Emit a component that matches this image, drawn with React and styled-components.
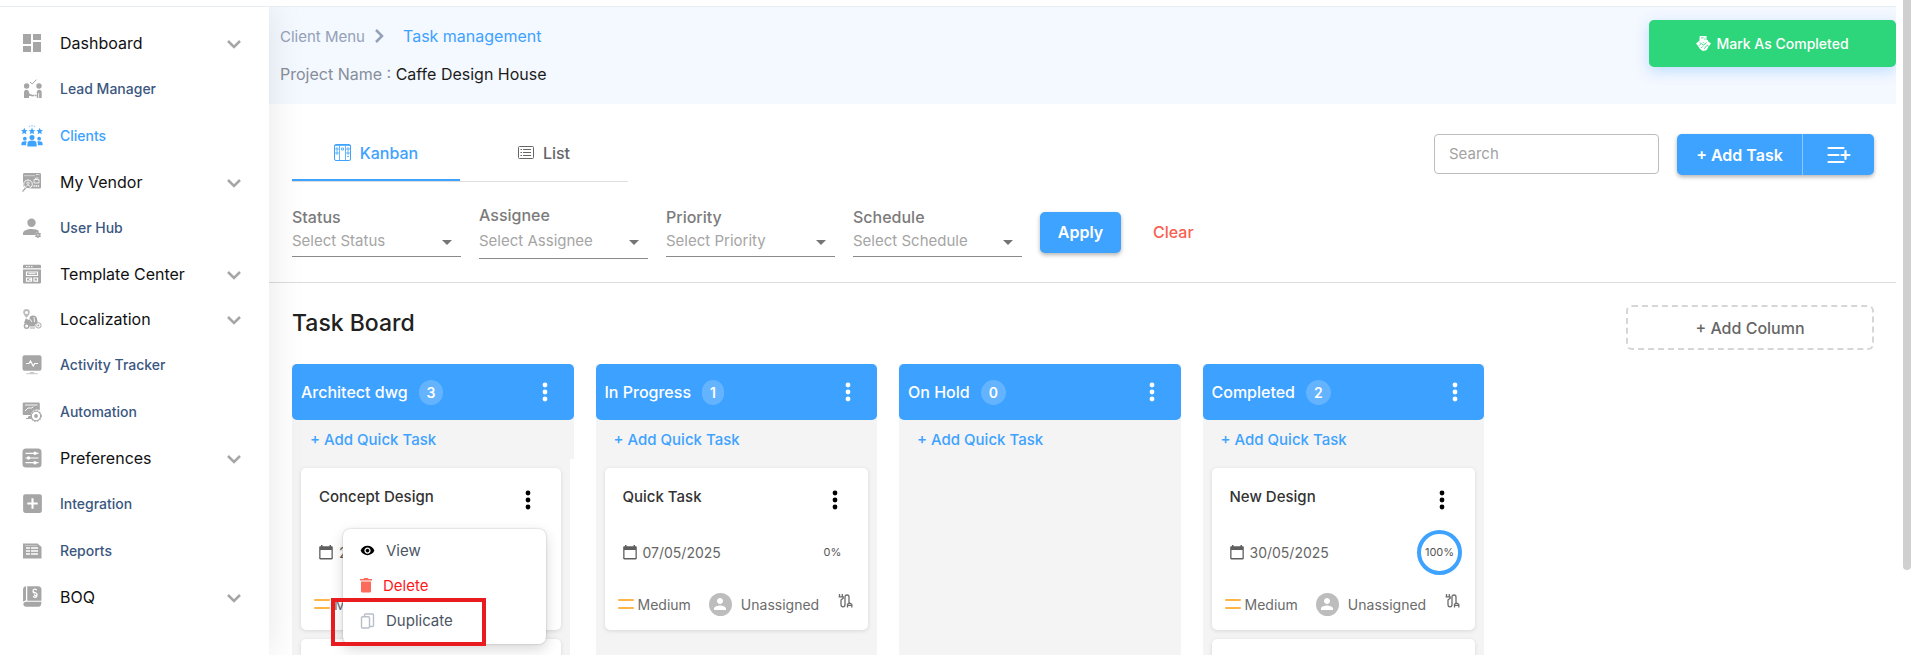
import React, { useState } from "react";
import styled, { createGlobalStyle, css } from "styled-components";
import {
  MdAddBox,
  MdArrowDropDown,
  MdDashboard,
  MdPerson,
  MdVisibility,
} from "react-icons/md";

const blue = "#3ea2ff";
const grey = "#a6a6a6";

const GlobalStyle = createGlobalStyle`
  * {
    box-sizing: border-box;
  }
  body {
    margin: 0;
    background: #fff;
    font-family: Inter, "Open Sans", sans-serif;
    font-size: 16px;
    color: #212121;
  }
  button, input, select {
    font: inherit;
    margin: 0;
  }
  button {
    border: 0;
    padding: 0;
    background: none;
    cursor: pointer;
  }
  svg {
    display: block;
    flex: none;
  }
`;

// page frame

const Page = styled.div`
  display: flex;
  height: 100vh;
  overflow: hidden;
`;

const Window = styled.div`
  flex: 1;
  min-width: 0;
  display: flex;
  flex-direction: column;
`;

const TopStrip = styled.div`
  flex: none;
  height: 7px;
  border-bottom: 1px solid #e8edf1;
`;

const Body = styled.div`
  flex: 1;
  min-height: 0;
  display: flex;
  overflow: hidden;
`;

const ScrollTrack = styled.div`
  width: 8px;
  margin-left: 7px;
`;

const ScrollThumb = styled.div`
  height: 87%;
  background: #d0d0d0;
  border-radius: 0 0 4px 4px;
`;

// sidebar

const Sidebar = styled.nav`
  position: relative;
  z-index: 1;
  flex: none;
  width: 269px;
  padding: 13px 24px 0 20px;
  background: #fff;
  box-shadow: 0 0 36px rgba(0, 0, 0, 0.1);
`;

const navRow = css`
  display: flex;
  align-items: center;
  width: 100%;
  text-align: left;
`;

const NavGroup = styled.button`
  ${navRow}
  height: 45px;
  color: #111;
`;

const NavLink = styled.a`
  ${navRow}
  height: 47px;
  font-size: 14px;
  font-weight: 500;
  text-decoration: none;
  color: ${(props) => (props.$active ? blue : "#3b5780")};
`;

const NavIcon = styled.span`
  display: flex;
  justify-content: center;
  width: 24px;
  margin-right: 16px;
  color: ${(props) => (props.$active ? blue : grey)};
`;

const NavLabel = styled.span`
  flex: 1;
`;

const NavArrow = styled.span`
  margin-right: 4px;
  color: ${grey};
`;

// header

const Main = styled.main`
  flex: 1;
  min-width: 0;
  display: flex;
  flex-direction: column;
`;

const Header = styled.header`
  display: flex;
  justify-content: space-between;
  align-items: flex-start;
  height: 97px;
  padding: 13px 0 0 11px;
  background: #f4f8ff;
`;

const Crumbs = styled.div`
  display: flex;
  align-items: center;
  height: 32px;
  gap: 6px;
  font-size: 15px;
  color: #93a1b7;

  a {
    color: inherit;
    text-decoration: none;
  }
  a:last-child {
    margin-left: 12px;
    font-size: 16px;
    color: ${blue};
  }
`;

const ProjectName = styled.p`
  margin: 12px 0 0;
  line-height: 20px;
  color: #858e9a;

  strong {
    font-weight: 400;
    color: #1c1c1c;
  }
`;

const CompleteButton = styled.button`
  display: flex;
  align-items: center;
  justify-content: center;
  gap: 5px;
  width: 247px;
  height: 47px;
  border-radius: 5px;
  background: #2ed67b;
  color: #fff;
  font-size: 14px;
  font-weight: 500;
  box-shadow: 0 4px 14px rgba(62, 162, 255, 0.3);
`;

// toolbar

const Toolbar = styled.div`
  display: flex;
  justify-content: space-between;
  align-items: flex-start;
  padding: 22px 22px 0 23px;
`;

const Tabs = styled.div`
  display: flex;
  border-bottom: 1px solid #dedede;
`;

const Tab = styled.button`
  display: flex;
  align-items: center;
  justify-content: center;
  gap: 9px;
  width: 168px;
  height: 55px;
  border-bottom: 2px solid ${(props) => (props.$active ? blue : "transparent")};
  color: ${(props) => (props.$active ? blue : "#666")};
  font-weight: 500;
`;

const Actions = styled.div`
  display: flex;
  gap: 18px;
  padding-top: 8px;
`;

const Search = styled.input`
  width: 225px;
  height: 40px;
  padding: 0 14px 2px;
  border: 1px solid #bdbdbd;
  border-radius: 4px;
  font-size: 15px;
  outline: none;

  &::placeholder {
    color: #a3a3a3;
  }
`;

const SplitButton = styled.div`
  display: flex;
  height: 41px;
  border-radius: 5px;
  overflow: hidden;
  background: ${blue};
  box-shadow: 0 2px 4px rgba(0, 0, 0, 0.3);
`;

const SplitPart = styled.button`
  display: flex;
  align-items: center;
  justify-content: center;
  width: ${(props) => (props.$wide ? "126px" : "71px")};
  border-right: ${(props) => (props.$wide ? "1px solid #8cc7ff" : "0")};
  color: #fff;
  font-weight: 600;
`;

const Filters = styled.form`
  display: flex;
  align-items: center;
  gap: 18px;
  padding: 23px;
  border-bottom: 1px solid #dcdcdc;
`;

const Field = styled.div`
  width: 169px;
`;

const FieldLabel = styled.label`
  display: block;
  line-height: 20px;
  font-weight: 500;
  color: #7b7b7b;
`;

const SelectBox = styled.div`
  display: flex;
  align-items: center;
  height: ${(props) => (props.$tall ? "34px" : "30px")};
  border-bottom: 1px solid #8a8a8a;
  color: #757575;

  select {
    flex: 1;
    min-width: 0;
    height: 100%;
    padding: 0 0 2px;
    border: 0;
    appearance: none;
    background: none;
    outline: none;
    font-size: 15px;
    color: #a5a5a5;
  }
`;

const Caret = styled(MdArrowDropDown)`
  margin-right: 2px;
  pointer-events: none;
`;

const ApplyButton = styled.button`
  width: 81px;
  height: 41px;
  border-radius: 5px;
  background: ${blue};
  color: #fff;
  font-weight: 600;
  box-shadow: 0 2px 4px rgba(0, 0, 0, 0.3);
`;

const ClearButton = styled.button`
  padding: 0 14px;
  color: #f9604f;
  font-weight: 500;
`;

// board

const BoardHead = styled.div`
  display: flex;
  justify-content: space-between;
  align-items: center;
  padding: 22px 22px 14px 23px;

  h1 {
    margin: 0 0 9px;
    font-size: 23px;
    font-weight: 500;
  }
`;

const AddColumn = styled.button`
  width: 248px;
  height: 45px;
  border: 2px dashed #d6d6d6;
  border-radius: 6px;
  color: #666;
  font-weight: 500;
`;

const Columns = styled.div`
  flex: 1;
  min-height: 0;
  display: grid;
  grid-template-columns: repeat(4, minmax(0, 1fr));
  gap: 22px;
  max-width: 1215px;
  padding-left: 23px;
`;

const Column = styled.section`
  display: flex;
  flex-direction: column;
  min-height: 0;
  background: #f4f4f4;
`;

const ColumnHead = styled.div`
  flex: none;
  display: flex;
  align-items: center;
  height: 56px;
  padding: 0 18px 0 9px;
  border-radius: 5px;
  background: #3da1ff;
  color: #fff;

  h2 {
    margin: 0 11px 0 0;
    font-size: 16px;
    font-weight: 500;
  }
`;

const Count = styled.span`
  padding: 0 8px;
  line-height: 25px;
  border-radius: 13px;
  background: rgba(255, 255, 255, 0.2);
  font-size: 14px;
  font-weight: 600;
`;

const DotsButton = styled.button`
  display: flex;
  justify-content: center;
  width: 22px;
  margin-left: auto;
  color: ${(props) => (props.$dark ? "#000" : "#fff")};
`;

const QuickTask = styled.button`
  align-self: flex-start;
  height: 39px;
  padding: 0 18px;
  color: ${blue};
  font-size: 15px;
  font-weight: 500;
`;

const CardList = styled.div`
  flex: 1;
  min-height: 0;
  display: flex;
  flex-direction: column;
  gap: 9px;
  padding: 9px;
  border-right: ${(props) => (props.$scrolls ? "4px solid #fff" : "0")};
`;

const Card = styled.article`
  position: relative;
  flex: none;
  height: 162px;
  border-radius: 5px;
  background: #fff;
  box-shadow: 0 1px 4px rgba(0, 0, 0, 0.12);
`;

const CardTop = styled.div`
  display: flex;
  align-items: center;
  height: 64px;
  padding: 0 22px 0 18px;

  h3 {
    margin: 0 0 8px;
    font-size: 15px;
    font-weight: 500;
    color: #333;
  }
`;

const CardMiddle = styled.div`
  display: flex;
  align-items: center;
  justify-content: space-between;
  height: 40px;
  padding: 0 13px 0 18px;
`;

const DateText = styled.span`
  display: flex;
  align-items: center;
  gap: 6px;
  font-size: 14px;
  color: #666;
`;

const Progress = styled.span`
  display: flex;
  align-items: center;
  justify-content: center;
  width: 45px;
  height: 45px;
  border: 4px solid ${(props) => (props.$done ? blue : "transparent")};
  border-radius: 50%;
  font-size: 11px;
  color: #555;
`;

const CardBottom = styled.div`
  display: flex;
  align-items: center;
  height: 64px;
  padding: 0 15px 0 13px;
  font-size: 14px;
  color: #6b6b6b;
`;

const Priority = styled.span`
  display: flex;
  align-items: center;
  gap: 4px;
  margin-right: 18px;
`;

const Avatar = styled.span`
  display: flex;
  align-items: center;
  justify-content: center;
  width: 23px;
  height: 23px;
  margin-right: 9px;
  border-radius: 50%;
  background: #bdbdbd;
  color: #fff;
`;

const Dependency = styled.span`
  margin: 0 0 6px auto;
`;

// dropdown opened over the first card

const Menu = styled.div`
  position: absolute;
  z-index: 2;
  top: 61px;
  left: 42px;
  width: 203px;
  padding: 4px 0 6px;
  border-radius: 7px;
  background: #fff;
  box-shadow: 0 0 2px rgba(0, 0, 0, 0.25), 0 5px 14px rgba(0, 0, 0, 0.16);
`;

const MenuItem = styled.button`
  display: flex;
  align-items: center;
  gap: 11px;
  width: 100%;
  height: 35px;
  padding-left: 17px;
  font-size: 15px;
  color: ${(props) => (props.$danger ? "#ff1a1a" : "#4b5563")};
`;

const Marker = styled.div`
  position: absolute;
  z-index: 3;
  top: 130px;
  left: 30px;
  width: 155px;
  height: 48px;
  border: 4px solid #e81c1f;
  pointer-events: none;
`;

// icons

const Icon = ({ size = 20, children }) => (
  <svg width={size} height={size} viewBox="0 0 20 20" fill="currentColor" aria-hidden="true">
    {children}
  </svg>
);

const LeadIcon = () => (
  <Icon>
    <circle cx="4.600" cy="7" r="2.700" />
    <circle cx="17" cy="7" r="2.700" />
    <path d="M8 3l2.200 2L14.500.6" fill="none" stroke="currentColor" strokeWidth="1" />
    <path d="M2 19v-5.500c0-2 1-2.800 2.400-2.800S6.500 11.500 7 13l.7 2 3.300 1v1.500l-4-.7V19zM19.700 19v-5.500c0-2-1-2.800-2.400-2.800s-2 .8-2.500 2.300V19h1.500v-5h.8v5z" />
    <path d="M11 16.500h3.500" stroke="currentColor" strokeWidth="1.600" strokeDasharray="1.500 .6" />
  </Icon>
);

const star = "l.9 2 2.100.2-1.600 1.400.5 2.100-1.900-1.100-1.900 1.100.5-2.100-1.600-1.400 2.100-.2z";

const ClientsIcon = () => (
  <Icon size={22}>
    <path d={`M3 2.600${star}M10 2.600${star}M17 2.600${star}`} />
    <path d="M10 0v1.400M7.500.7l.6 1M12.500.7l-.6 1" stroke="currentColor" strokeWidth=".7" />
    <circle cx="10" cy="11.300" r="2.300" />
    <circle cx="3.500" cy="12.400" r="1.700" />
    <circle cx="16.500" cy="12.400" r="1.700" />
    <path d="M5.800 19.600v-2.400c0-2 1.600-3 4.200-3s4.200 1 4.200 3v2.400zM.4 18.500v-1.600c0-1.500 1.200-2.200 3-2.200.8 0 1.400.1 1.900.4-.6.800-.7 1.600-.7 3.400zM19.600 18.500v-1.600c0-1.500-1.200-2.200-3-2.200-.8 0-1.400.1-1.900.4.6.8.7 1.600.7 3.400z" />
  </Icon>
);

const VendorIcon = () => (
  <Icon>
    <path d="M2.500 1h15c.8 0 1.500.5 1.500 1.500V15c0 1-.7 1.500-1.500 1.500H4L1 14V2.500C1 1.500 1.700 1 2.500 1z" />
    <path d="M2 3.700h11" stroke="#fff" strokeWidth=".7" opacity=".7" />
    <path d="M14 2.600h3.500" stroke="#fff" strokeWidth="1" strokeDasharray=".8 .5" />
    <path d="M12 7.500h5v3.500h-5zM13.500 7.500V6h3" fill="none" stroke="#fff" strokeWidth=".8" />
    <circle cx="6" cy="12.300" r="4.300" fill="none" stroke="#fff" strokeWidth="1" />
    <circle cx="6" cy="11.200" r="1.200" fill="none" stroke="#fff" strokeWidth=".8" />
    <path d="M3.800 14.800c.6-2 3.800-2 4.400 0" fill="none" stroke="#fff" strokeWidth=".8" />
    <path d="M11.500 14h6" stroke="#fff" strokeWidth="1.600" strokeDasharray="1.400 .7" />
    <path d="M3 15.500l1 1-3 3.500-.9-.8z" />
  </Icon>
);

const UserIcon = () => (
  <Icon>
    <circle cx="9.500" cy="4.700" r="4.200" />
    <path d="M1 17v-1.500c0-3 4-4.500 8.500-4.500 3.500 0 6.300.8 7.700 2.300L13 15.500l1 1.500z" />
    <circle cx="16" cy="17" r="2.500" />
    <path d="M16 13.900v6.200M13.300 15.500l5.400 3M13.300 18.500l5.400-3" stroke="currentColor" strokeWidth="1.300" />
    <circle cx="16" cy="17" r=".7" fill="#fff" />
  </Icon>
);

const TemplateIcon = () => (
  <Icon>
    <path fillRule="evenodd" d="M2 .7h16q1 0 1 1v2.500H1V1.700q0-1 1-1zM1 5.400h18v13.100q0 1-1 1H2q-1 0-1-1z" />
    <path d="M4 2.600h1.500M6.500 2.600H8M9 2.600h1.500" stroke="#fff" strokeWidth="1" />
    <path d="M4.500 8h11v3.500h-11zM4.500 14h5v3.200h-5zM12 14h3.500v3.200H12z" fill="none" stroke="#fff" strokeWidth="1.200" />
    <path d="M6.500 9.700h7M7 15.600h2" stroke="#fff" strokeWidth="1" />
  </Icon>
);

const LocalizationIcon = () => (
  <Icon>
    <path fillRule="evenodd" d="M4.500 0a3.300 3.300 0 013.300 3.300C7.800 5.500 4.500 9 4.500 9S1.200 5.500 1.200 3.300A3.300 3.300 0 014.500 0zm0 1.900a1.500 1.500 0 100 3 1.500 1.500 0 000-3z" opacity=".75" />
    <path d="M8 7.500c3-2 6.500-1 7 2l.7 4c-2 .6-3 2-3 4H7.500c-.4-1.700-1.600-2.700-3.300-2.700L2 14l1.700-4.500L7 11z" />
    <path d="M7.500 9.500L10 13M12 8l.5 5" stroke="#fff" strokeWidth=".9" />
    <circle cx="4.600" cy="17" r="2.200" fill="none" stroke="currentColor" strokeWidth="1.400" />
    <circle cx="16.400" cy="16.400" r="2.700" fill="none" stroke="currentColor" strokeWidth="1" />
    <circle cx="16.400" cy="16.400" r="1" />
    <path d="M8 19h5" stroke="currentColor" strokeWidth="1" />
  </Icon>
);

const ActivityIcon = () => (
  <Icon>
    <rect x=".5" y=".3" width="19" height="15.500" rx="2" />
    <path d="M4 8.500h3l1.500-2.500 2.700 5 1.500-2.500H16" fill="none" stroke="#fff" strokeWidth="1.200" />
    <path d="M8 17h4l.5 1.200H16v1H4v-1h3.500z" opacity=".6" />
  </Icon>
);

const AutomationIcon = () => (
  <Icon>
    <path d="M2 .6h14.500c.8 0 1.300.5 1.300 1.300v6.400a6 6 0 00-9 4.700H2c-.8 0-1.300-.5-1.300-1.300V1.900C.7 1.100 1.200.6 2 .6zM6.500 14h2.300l.9 3H4v-1h2z" />
    <path d="M3 3h12.500M3 9l3-3h4l1.500-1.500" fill="none" stroke="#fff" strokeWidth=".9" />
    <circle cx="14" cy="14" r="4.700" fill="#fff" stroke="currentColor" strokeWidth="1.100" />
    <circle cx="14" cy="14" r="5.500" fill="none" stroke="currentColor" strokeWidth="1" strokeDasharray="1.500 1.400" />
    <circle cx="14" cy="14" r="1.900" />
  </Icon>
);

const PreferencesIcon = () => (
  <Icon>
    <rect x=".5" y=".5" width="19" height="19" rx="3.500" />
    <path d="M3.500 5.300h13M3.500 10h13M3.500 14.700h13" stroke="#fff" strokeWidth="1.200" />
    <circle cx="13" cy="5.300" r="1.700" fill="#fff" />
    <circle cx="6.500" cy="10" r="1.700" fill="#fff" />
    <circle cx="13" cy="14.700" r="1.700" fill="#fff" />
  </Icon>
);

const ReportsIcon = () => (
  <Icon>
    <path d="M1 2.500h14.500L19.500 6v11.500H1z" />
    <path d="M4 7h4M4 10h4M4 13h4M9 7h7M9 10h7M9 13h7" stroke="#fff" strokeWidth="1.500" />
    <path d="M3 4.500h12" stroke="#fff" strokeWidth=".6" opacity=".6" />
  </Icon>
);

const BoqIcon = () => (
  <Icon size={21}>
    <path d="M3.800.3v13.200L1 15V3.500C1 1.500 2 .5 3.800.3zM5 .2h10.500C17.500.2 18.500 1.500 18.500 3v11H5zM4 15h14.500c0 3.500-1 4.800-3.500 4.800H4c-3.500 0-3.500-4.800 0-4.800z" />
    <path d="M14 4.200c-.5-1.700-3.500-1.500-3.500.4 0 2.300 3.800 1.200 3.800 3.300 0 1.500-2.300 1.600-2.600.2M10.800 9.700c.5 1.800 3.800 1.500 3.500-1.500M10.500 4.500c0 2.500 1.200 2.500 2 1.500" fill="none" stroke="#fff" strokeWidth="1.200" />
  </Icon>
);

const Chevron = ({ right }) => (
  <svg width="14" height="14" viewBox="0 0 14 14" fill="none" stroke="currentColor" strokeWidth="2.500" aria-hidden="true">
    <path d={right ? "M5 1l6 6-6 6" : "M1 5l6 6 6-6"} />
  </svg>
);

const HandsIcon = () => (
  <Icon size={15}>
    <path d="M5 0h9v5l2 .5-.5 3-2.500 1L10 8 6 10 4.500 7z" />
    <path d="M0 10l4-3.500L10 9l5-3 5 4-3 4-3 5-5 1-4-3-2.500-4z" />
    <path d="M7 2.500h3M11 4h2M5 9l5 3 4-3M4 13l2-2M7 16l2-2M11 17l3-4M14 12l3 2" stroke="#2ed67b" strokeWidth="1.200" fill="none" />
  </Icon>
);

const KanbanIcon = () => (
  <svg width="17" height="17" viewBox="0 0 17 17" fill="none" stroke="currentColor" aria-hidden="true">
    <rect x=".5" y=".5" width="16" height="16" rx="1.500" />
    <path d="M5.500 2v14.500M11.500 2v14.500M.5 1.500h16" strokeWidth=".8" />
    <path d="M2 4h2v2H2zM2 8h2v2H2zM7.500 4h2v2h-2zM13 4h2v2h-2zM13 8h2v2h-2zM13 12.500h2" strokeWidth=".8" />
  </svg>
);

const ListIcon = () => (
  <svg width="16" height="13" viewBox="0 0 16 13" fill="none" stroke="currentColor" aria-hidden="true">
    <rect x=".5" y=".5" width="15" height="12" rx="1" />
    <path d="M2.500 3.500H4M5 3.500h8M2.500 6.500H4M5 6.500h8M2.500 9.500H4M5 9.500h8" />
  </svg>
);

const AddRowsIcon = () => (
  <svg width="24" height="18" viewBox="0 0 24 18" fill="none" stroke="currentColor" strokeWidth="2.200" strokeLinecap="round" aria-hidden="true">
    <path d="M1.500 2h15M1.500 9h10M1.500 16h15M14.500 9h8M18.500 5v8" />
  </svg>
);

const Dots = () => (
  <svg width="6" height="20" viewBox="0 0 6 20" fill="currentColor" aria-hidden="true">
    <circle cx="3" cy="3" r="2.400" />
    <circle cx="3" cy="10" r="2.400" />
    <circle cx="3" cy="17" r="2.400" />
  </svg>
);

const CalendarIcon = () => (
  <svg width="14" height="16" viewBox="0 0 14 16" fill="#5f5f5f" aria-hidden="true">
    <path d="M2 1h1.500v1.300h7V1H12v1.300h.7c.7 0 1.100.5 1.100 1.100v10.900c0 .6-.4 1.100-1.100 1.100H1.300c-.7 0-1.100-.5-1.100-1.100V3.400c0-.6.4-1.100 1.100-1.100H2zM1.500 6v8h11V6z" fillRule="evenodd" />
  </svg>
);

const MediumIcon = () => (
  <svg width="16" height="12" viewBox="0 0 16 12" fill="none" stroke="#ffb547" strokeWidth="2" strokeLinecap="round" aria-hidden="true">
    <path d="M1 2h14M1 10h14" />
  </svg>
);

const PlugIcon = () => (
  <svg width="15" height="14" viewBox="0 0 15 14" fill="none" stroke="#6b6b6b" strokeWidth="1.300" aria-hidden="true">
    <path d="M1.500 0v2.500M4.300 0v2.500M.6 2.800h4.600v1.400L3 6v4.500q0 2.300 2 2.300t2-2.300V3q0-2 2-2t2 2v5.500M9.500 13.500v-3.200l1.800-1.600 2.500 1.600v3.200M9.500 11.300h4.300" />
  </svg>
);

const TrashIcon = () => (
  <svg width="12" height="15" viewBox="0 0 12 15" fill="#fb6a5b" aria-hidden="true">
    <path d="M0 1h3.500L4 0h4l.5 1H12v1.500H0zM1 3.500h10V13q0 1.500-1.500 1.500h-7Q1 14.500 1 13z" />
  </svg>
);

const CopyIcon = () => (
  <svg width="15" height="16" viewBox="0 0 14 16" fill="none" stroke="#b9bfc7" strokeWidth="1.400" strokeLinejoin="round" aria-hidden="true">
    <path d="M1 5q0-1.200 1.200-1.200h5.600Q9 3.800 9 5v8.800Q9 15 7.800 15H2.200Q1 15 1 13.800zM4 3.500V2Q4 1 5 1h7.200Q13 1 13 2v10.500q0 1-1 1H9.500" />
  </svg>
);

const navItems = [
  { label: "Dashboard", icon: <MdDashboard size={24} />, group: true },
  { label: "Lead Manager", icon: <LeadIcon /> },
  { label: "Clients", icon: <ClientsIcon />, active: true },
  { label: "My Vendor", icon: <VendorIcon />, group: true },
  { label: "User Hub", icon: <UserIcon /> },
  { label: "Template Center", icon: <TemplateIcon />, group: true },
  { label: "Localization", icon: <LocalizationIcon />, group: true },
  { label: "Activity Tracker", icon: <ActivityIcon /> },
  { label: "Automation", icon: <AutomationIcon /> },
  { label: "Preferences", icon: <PreferencesIcon />, group: true },
  { label: "Integration", icon: <MdAddBox size={25} /> },
  { label: "Reports", icon: <ReportsIcon /> },
  { label: "BOQ", icon: <BoqIcon />, group: true },
];

const filters = ["Status", "Assignee", "Priority", "Schedule"];

const columns = [
  {
    name: "Architect dwg",
    count: 3,
    tasks: [{ title: "Concept Design", date: "28/05/2025", progress: 0, menu: true }, {}],
  },
  {
    name: "In Progress",
    count: 1,
    tasks: [{ title: "Quick Task", date: "07/05/2025", progress: 0 }],
  },
  { name: "On Hold", count: 0, tasks: [] },
  {
    name: "Completed",
    count: 2,
    tasks: [{ title: "New Design", date: "30/05/2025", progress: 100 }, {}],
  },
];

const NavItem = ({ item }) => {
  const content = (
    <>
      <NavIcon $active={item.active}>{item.icon}</NavIcon>
      <NavLabel>{item.label}</NavLabel>
    </>
  );

  if (item.group) {
    return (
      <NavGroup type="button">
        {content}
        <NavArrow>
          <Chevron />
        </NavArrow>
      </NavGroup>
    );
  }
  return (
    <NavLink href="#" $active={item.active}>
      {content}
    </NavLink>
  );
};

const TaskCard = ({ task }) => {
  if (!task.title) return <Card />;

  return (
    <Card>
      <CardTop>
        <h3>{task.title}</h3>
        <DotsButton type="button" $dark aria-label="Task options">
          <Dots />
        </DotsButton>
      </CardTop>
      <CardMiddle>
        <DateText>
          <CalendarIcon />
          {task.date}
        </DateText>
        <Progress $done={task.progress === 100}>{task.progress}%</Progress>
      </CardMiddle>
      <CardBottom>
        <Priority>
          <MediumIcon />
          Medium
        </Priority>
        <Avatar>
          <MdPerson size={18} />
        </Avatar>
        Unassigned
        <Dependency>
          <PlugIcon />
        </Dependency>
      </CardBottom>
      {task.menu && (
        <>
          <Menu>
            <MenuItem type="button">
              <MdVisibility size={15} color="#000" />
              View
            </MenuItem>
            <MenuItem type="button" $danger>
              <TrashIcon />
              Delete
            </MenuItem>
            <MenuItem type="button">
              <CopyIcon />
              Duplicate
            </MenuItem>
          </Menu>
          <Marker />
        </>
      )}
    </Card>
  );
};

const App = () => {
  const [tab, setTab] = useState("kanban");
  const [search, setSearch] = useState("");

  return (
    <Page>
      <GlobalStyle />
      <Window>
        <TopStrip />
        <Body>
          <Sidebar>
            {navItems.map((item) => (
              <NavItem key={item.label} item={item} />
            ))}
          </Sidebar>

          <Main>
            <Header>
              <div>
                <Crumbs>
                  <a href="#">Client Menu</a>
                  <Chevron right />
                  <a href="#">Task management</a>
                </Crumbs>
                <ProjectName>
                  Project Name : <strong>Caffe Design House</strong>
                </ProjectName>
              </div>
              <CompleteButton type="button">
                <HandsIcon />
                Mark As Completed
              </CompleteButton>
            </Header>

            <Toolbar>
              <Tabs>
                <Tab type="button" $active={tab === "kanban"} onClick={() => setTab("kanban")}>
                  <KanbanIcon />
                  Kanban
                </Tab>
                <Tab type="button" $active={tab === "list"} onClick={() => setTab("list")}>
                  <ListIcon />
                  List
                </Tab>
              </Tabs>
              <Actions>
                <Search
                  aria-label="Search"
                  placeholder="Search"
                  value={search}
                  onChange={(e) => setSearch(e.target.value)}
                />
                <SplitButton>
                  <SplitPart type="button" $wide>
                    + Add Task
                  </SplitPart>
                  <SplitPart type="button" aria-label="Add several tasks">
                    <AddRowsIcon />
                  </SplitPart>
                </SplitButton>
              </Actions>
            </Toolbar>

            <Filters onSubmit={(e) => e.preventDefault()}>
              {filters.map((name) => (
                <Field key={name}>
                  <FieldLabel htmlFor={name}>{name}</FieldLabel>
                  <SelectBox $tall={name === "Assignee"}>
                    <select id={name}>
                      <option>Select {name}</option>
                    </select>
                    <Caret size={24} />
                  </SelectBox>
                </Field>
              ))}
              <ApplyButton type="submit">Apply</ApplyButton>
              <ClearButton type="reset">Clear</ClearButton>
            </Filters>

            <BoardHead>
              <h1>Task Board</h1>
              <AddColumn type="button">+ Add Column</AddColumn>
            </BoardHead>

            <Columns>
              {columns.map((column) => (
                <Column key={column.name}>
                  <ColumnHead>
                    <h2>{column.name}</h2>
                    <Count>{column.count}</Count>
                    <DotsButton type="button" aria-label="Column options">
                      <Dots />
                    </DotsButton>
                  </ColumnHead>
                  <QuickTask type="button">+ Add Quick Task</QuickTask>
                  <CardList $scrolls={column.count > 2}>
                    {column.tasks.map((task, i) => (
                      <TaskCard key={i} task={task} />
                    ))}
                  </CardList>
                </Column>
              ))}
            </Columns>
          </Main>
        </Body>
      </Window>
      <ScrollTrack>
        <ScrollThumb />
      </ScrollTrack>
    </Page>
  );
};

export default App;
